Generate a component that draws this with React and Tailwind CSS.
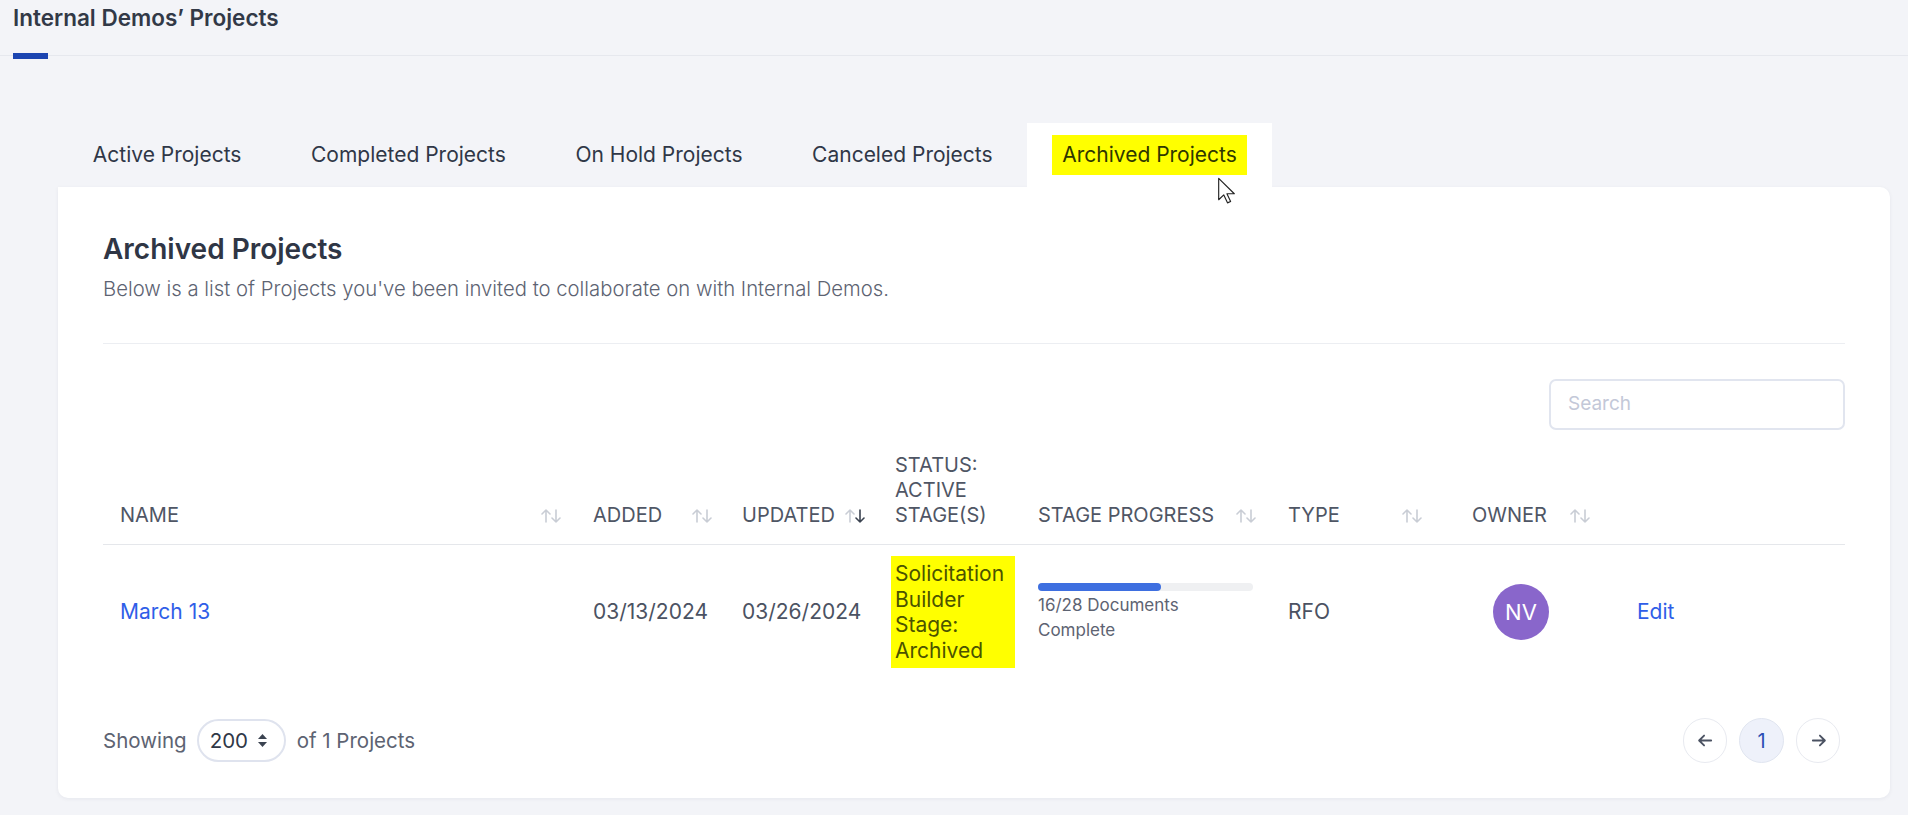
import React from 'react'

const COLS = 'grid grid-cols-[473px_149px_153px_143px_250px_184px_164px_227px]'

function SortIcon({ active = false }) {
  return (
    <svg width="24" height="14" viewBox="0 0 24 14" fill="none" strokeWidth="1.6" strokeLinecap="round" strokeLinejoin="round" className="shrink-0 mb-[5px]">
      <g stroke="#c9cdd5">
        <path d="M7 13V1M3 5l4-4 4 4" />
      </g>
      <g stroke={active ? '#3b4350' : '#c9cdd5'}>
        <path d="M17 1v12M13 9l4 4 4-4" />
      </g>
    </svg>
  )
}

function Th({ children, icon, pr = 'pr-[13px]', justify = 'justify-between', active }) {
  return (
    <div className={`flex items-end ${justify} pl-[17px] ${pr} pt-[23px] pb-[16px]`}>
      <span className="leading-[25px]">{children}</span>
      {icon && <SortIcon active={active} />}
    </div>
  )
}

export default function App() {
  const tabs = ['Active Projects', 'Completed Projects', 'On Hold Projects', 'Canceled Projects', 'Archived Projects']
  const active = 'Archived Projects'

  return (
    <div className="min-h-screen bg-[#f3f4f8] font-[Inter,sans-serif] text-[#3a4150] pb-[18px]">
      {/* page header */}
      <div className="h-[56px] border-b border-[#e6e8ee] px-[13px] flex flex-col justify-between">
        <h1 className="text-[22.5px] leading-[30px] font-semibold text-[#323947] pt-[3px]">Internal Demos’ Projects</h1>
        <div className="w-[35px] h-[6px] bg-[#1c45b1] -mb-[4px] relative" />
      </div>

      {/* tabs */}
      <div className="relative mt-[67px] ml-[58px] mr-[18px]">
        <div className="flex">
          {tabs.map((t) => (
            <div
              key={t}
              className={`h-[64px] flex items-center px-[34.8px] text-[21px] ${t === active ? 'bg-white' : ''}`}
            >
              {t === active ? (
                <span className="bg-[#ffff00] text-[#2f3700] px-[10px] py-[4px] -mx-[10px]">{t}</span>
              ) : (
                <span className="text-[#2f3747]">{t}</span>
              )}
            </div>
          ))}
        </div>

        {/* card */}
        <div className="bg-white rounded-[10px] rounded-tl-none shadow-[0_1px_4px_rgba(20,30,60,0.06)] px-[45px] pt-[45px] pb-[35px]">
          <h2 className="text-[28px] leading-[34px] font-semibold text-[#2f3645]">Archived Projects</h2>
          <p className="mt-[9px] text-[20.3px] leading-[28px] font-light text-[#5d6372]">
            Below is a list of Projects you've been invited to collaborate on with Internal Demos.
          </p>
          <div className="mt-[40px] border-t border-[#eceef2]" />

          <div className="mt-[35px] flex justify-end">
            <div className="w-[296px] h-[51px] border-2 border-[#e1e5ef] rounded-[7px] flex items-center px-[17px] text-[19px] text-[#c3c8d8]">
              Search
            </div>
          </div>

          {/* table header */}
          <div className={`${COLS} border-b border-[#e5e7eb] text-[20px] uppercase text-[#4f5665]`}>
            <Th icon>Name</Th>
            <Th icon pr="pr-[11px]">Added</Th>
            <Th icon justify="justify-start gap-[8px]" active>Updated</Th>
            <Th>
              Status:
              <br />
              Active
              <br />
              Stage(s)
            </Th>
            <Th icon>Stage Progress</Th>
            <Th icon pr="pr-[31px]">Type</Th>
            <Th icon pr="pr-[27px]">Owner</Th>
            <div />
          </div>

          {/* row */}
          <div className={`${COLS} items-center pt-[11px] pb-[12px] text-[21px] text-[#4b5262]`}>
            <div className="pl-[17px] text-[#2f5ee8]">March 13</div>
            <div className="pl-[17px]">03/13/2024</div>
            <div className="pl-[17px]">03/26/2024</div>
            <div className="pl-[13px]">
              <div className="bg-[#ffff00] text-[#4b5300] px-[4px] py-[5px] leading-[25.6px] w-[124px]">
                Solicitation
                <br />
                Builder
                <br />
                Stage:
                <br />
                Archived
              </div>
            </div>
            <div className="pl-[17px]">
              <div className="w-[215px] h-[8px] rounded-full bg-[#eff0f2] mt-[2px]">
                <div className="h-full rounded-full bg-[#3e6fe0]" style={{ width: `${(16 / 28) * 100}%` }} />
              </div>
              <div className="text-[17px] leading-[25px] text-[#5d6372] mt-[2px]">
                16/28 Documents
                <br />
                Complete
              </div>
            </div>
            <div className="pl-[17px]">RFO</div>
            <div className="pl-[38px]">
              <div className="w-[56px] h-[56px] rounded-full bg-[#8966cb] text-white text-[22px] flex items-center justify-center">
                NV
              </div>
            </div>
            <div className="pl-[18px] text-[#2f5ee8]">Edit</div>
          </div>

          {/* footer */}
          <div className="mt-[38px] flex items-center justify-between">
            <div className="flex items-center text-[20.5px] text-[#5d6372]">
              <span>Showing</span>
              <div className="ml-[10px] w-[89px] h-[43px] rounded-full border-2 border-[#dfe3ee] flex items-center pl-[11px] gap-[9px] text-[#2f3747]">
                <span>200</span>
                <svg width="11" height="15" viewBox="0 0 11 15" fill="#3b4350">
                  <path d="M5.5 1L10 6H1z" />
                  <path d="M5.5 14L1 9h9z" />
                </svg>
              </div>
              <span className="ml-[11px]">of 1 Projects</span>
            </div>
            <div className="flex items-center gap-[12px] mr-[5px]">
              <div className="w-[44px] h-[45px] rounded-full border border-[#e8eaf0] flex items-center justify-center">
                <svg width="17" height="17" viewBox="0 0 24 24" fill="none" stroke="#4b5262" strokeWidth="2.6" strokeLinecap="round" strokeLinejoin="round">
                  <path d="M20 12H4M10 5l-7 7 7 7" />
                </svg>
              </div>
              <div className="w-[45px] h-[45px] rounded-full border border-[#e0e5f0] bg-[#eef1fa] flex items-center justify-center text-[20px] text-[#2a4fb5]">
                1
              </div>
              <div className="w-[44px] h-[45px] rounded-full border border-[#e8eaf0] flex items-center justify-center">
                <svg width="17" height="17" viewBox="0 0 24 24" fill="none" stroke="#4b5262" strokeWidth="2.6" strokeLinecap="round" strokeLinejoin="round">
                  <path d="M4 12h16M14 5l7 7-7 7" />
                </svg>
              </div>
            </div>
          </div>
        </div>

        {/* mouse cursor */}
        <svg width="19" height="27" viewBox="0 0 13 19" className="absolute left-[1159px] top-[54px]">
          <path d="M1 1v15l3.6-3.4 2.6 5.6 2.2-1-2.6-5.4H12z" fill="#fff" stroke="#222" strokeWidth="0.8" strokeLinejoin="round" />
        </svg>
      </div>
    </div>
  )
}
